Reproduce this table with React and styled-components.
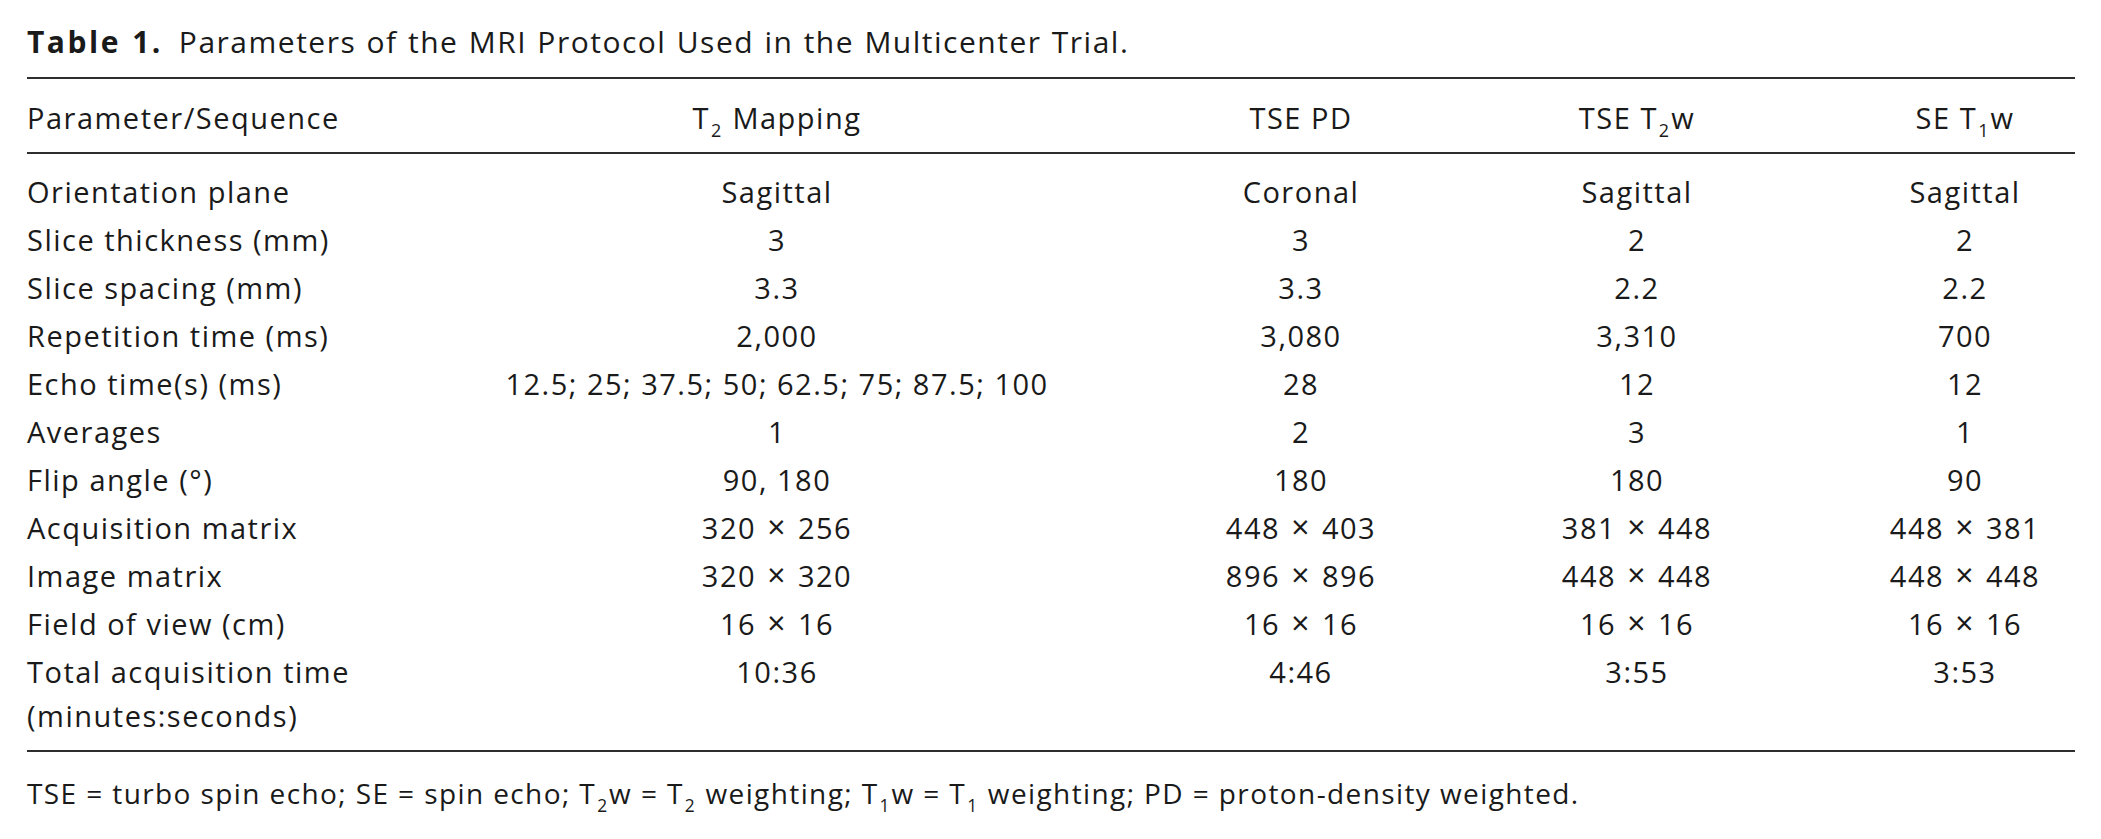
import React from "react";
import styled, { createGlobalStyle } from "styled-components";

const GlobalStyle = createGlobalStyle`
  html, body {
    margin: 0;
    padding: 0;
    background: #ffffff;
  }
  body {
    font-family: "Open Sans", "Noto Sans", "Liberation Sans", sans-serif;
    color: #1a1a1a;
  }
`;

const columns = ["344px", "812px", "236px", "436px", "220px"];

const Times = styled.span`
  font-size: 1.1em;
  line-height: 0;
  margin: 0 2px;
`;

const by = (a, b) => (
  <>
    {a} <Times>×</Times> {b}
  </>
);

const rows = [
  ["Orientation plane", "Sagittal", "Coronal", "Sagittal", "Sagittal"],
  ["Slice thickness (mm)", "3", "3", "2", "2"],
  ["Slice spacing (mm)", "3.3", "3.3", "2.2", "2.2"],
  ["Repetition time (ms)", "2,000", "3,080", "3,310", "700"],
  ["Echo time(s) (ms)", "12.5; 25; 37.5; 50; 62.5; 75; 87.5; 100", "28", "12", "12"],
  ["Averages", "1", "2", "3", "1"],
  ["Flip angle (°)", "90, 180", "180", "180", "90"],
  ["Acquisition matrix", by(320, 256), by(448, 403), by(381, 448), by(448, 381)],
  ["Image matrix", by(320, 320), by(896, 896), by(448, 448), by(448, 448)],
  ["Field of view (cm)", by(16, 16), by(16, 16), by(16, 16), by(16, 16)],
  [
    <>
      Total acquisition time
      <br />
      (minutes:seconds)
    </>,
    "10:36",
    "4:46",
    "3:55",
    "3:53",
  ],
];

const Page = styled.section`
  width: 2048px;
  padding: 20px 26px 30px 27px;
  font-size: 29px;
  line-height: 44px;
  letter-spacing: 1.5px;
`;

const Caption = styled.p`
  margin: 0 0 13px;
  font-size: 30px;
  white-space: nowrap;
  word-spacing: 1px;
  b {
    font-weight: 700;
    letter-spacing: 2.5px;
    margin-right: 16px;
  }
`;

const Table = styled.table`
  width: 100%;
  border-collapse: collapse;
  table-layout: fixed;
  thead {
    border-top: 2px solid #2e2e2e;
    border-bottom: 2px solid #2e2e2e;
  }
  tbody {
    border-bottom: 2px solid #2e2e2e;
  }
`;

const Head = styled.th`
  font-weight: 400;
  padding: 17px 0 12px;
  text-align: ${(p) => (p.$left ? "left" : "center")};
  white-space: nowrap;
`;

const Cell = styled.td`
  padding: 0 0 4px;
  vertical-align: top;
  text-align: ${(p) => (p.$left ? "left" : "center")};
  white-space: nowrap;
  tr:first-child > & {
    padding-top: 16px;
  }
  tr:last-child > & {
    padding-bottom: 12px;
  }
`;

const Sub = styled.sub`
  font-size: 0.62em;
  line-height: 0;
  vertical-align: -0.45em;
  letter-spacing: 0;
  margin: 0 2px 0 1px;
`;

const Footnote = styled.p`
  margin: 19px 0 0;
  font-size: 28px;
  letter-spacing: 1.4px;
  white-space: nowrap;
`;

export default function App() {
  return (
    <>
      <GlobalStyle />
      <Page>
        <Caption>
          <b>Table 1.</b>Parameters of the MRI Protocol Used in the Multicenter Trial.
        </Caption>
        <Table>
          <colgroup>
            {columns.map((w, i) => (
              <col key={i} style={{ width: w }} />
            ))}
          </colgroup>
          <thead>
            <tr>
              <Head $left>Parameter/Sequence</Head>
              <Head>
                T<Sub>2</Sub> Mapping
              </Head>
              <Head>TSE PD</Head>
              <Head>
                TSE T<Sub>2</Sub>w
              </Head>
              <Head>
                SE T<Sub>1</Sub>w
              </Head>
            </tr>
          </thead>
          <tbody>
            {rows.map((row, r) => (
              <tr key={r}>
                {row.map((value, c) => (
                  <Cell key={c} $left={c === 0}>
                    {value}
                  </Cell>
                ))}
              </tr>
            ))}
          </tbody>
        </Table>
        <Footnote>
          TSE = turbo spin echo; SE = spin echo; T<Sub>2</Sub>w = T<Sub>2</Sub> weighting;
          T<Sub>1</Sub>w = T<Sub>1</Sub> weighting; PD = proton-density weighted.
        </Footnote>
      </Page>
    </>
  );
}
